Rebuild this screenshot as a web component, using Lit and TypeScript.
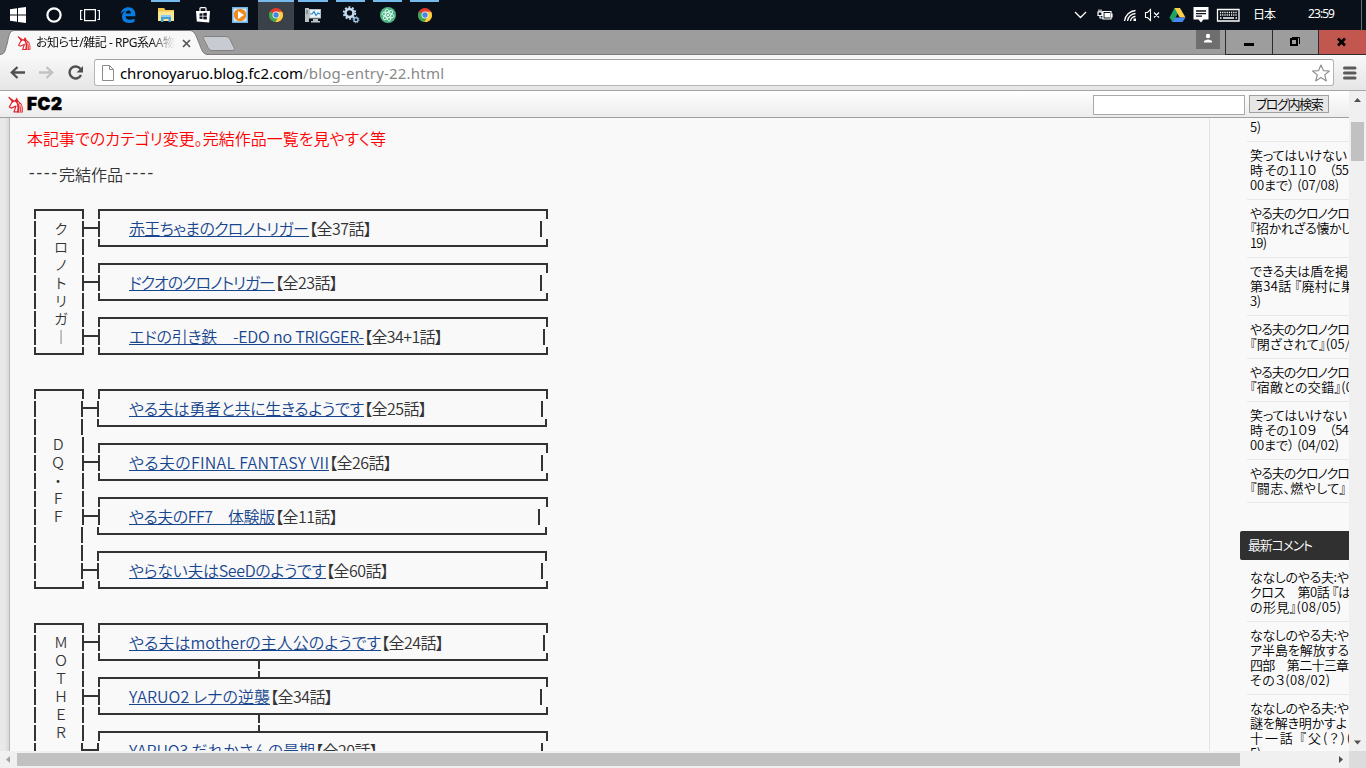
import { LitElement, html, css, svg, nothing } from 'lit';
import { customElement, property } from 'lit/decorators.js';
import { classMap } from 'lit/directives/class-map.js';

interface Work {
  title: string;
  width: number;
  count: string;
  countWidth: number;
  // x of the closing bar, measured from the left edge of the box
  bar: number;
  // left edge of the top, middle and bottom line
  left?: number[];
  // right edge of the top and bottom line
  right?: number[];
  linked?: boolean;
}

interface Group {
  label: string[];
  center: number;
  narrow?: number[];
  works: Work[];
}

const groups: Group[] = [
  {
    label: ['ク', 'ロ', 'ノ', 'ト', 'リ', 'ガ', '｜'],
    center: 27,
    works: [
      { title: '赤王ちゃまのクロノトリガー', width: 180, count: '【全37話】', countWidth: 63, bar: 442 },
      { title: 'ドクオのクロノトリガー', width: 146, count: '【全23話】', countWidth: 63, bar: 442 },
      { title: 'エドの引き鉄　-EDO no TRIGGER-', width: 235, count: '【全34+1話】', countWidth: 79, bar: 445 },
    ],
  },
  {
    label: ['', '', 'Ｄ', 'Ｑ', '・', 'Ｆ', 'Ｆ', '', '', ''],
    center: 24,
    narrow: [0, 1, 7, 8, 9],
    works: [
      { title: 'やる夫は勇者と共に生きるようです', width: 235, count: '【全25話】', countWidth: 63, bar: 443, left: [0, -1, -1], right: [0, -1] },
      { title: 'やる夫のFINAL FANTASY VII', width: 200, count: '【全26話】', countWidth: 63, bar: 443 },
      { title: 'やる夫のFF7　体験版', width: 146, count: '【全11話】', countWidth: 63, bar: 440, left: [0, 0, -1], right: [0, -1] },
      { title: 'やらない夫はSeeDのようです', width: 197, count: '【全60話】', countWidth: 63, bar: 443, left: [-1, -1, 0], right: [-1, 0] },
    ],
  },
  {
    label: ['Ｍ', 'Ｏ', 'Ｔ', 'Ｈ', 'Ｅ', 'Ｒ', ''],
    center: 27,
    narrow: [6],
    works: [
      { title: 'やる夫はmotherの主人公のようです', width: 252, count: '【全24話】', countWidth: 63, bar: 445, linked: true },
      { title: 'YARUO2 レナの逆襲', width: 141, count: '【全34話】', countWidth: 63, bar: 442, linked: true },
      { title: 'YARUO3 だれかさんの最期', width: 186, count: '【全20話】', countWidth: 63, bar: 443, left: [0, -1, 0] },
    ],
  },
];

type Line = [string, number];

const entries: Line[][] = [
  [['5)', 11]],
  [['笑ってはいけない', 97], ['時 その１１０　（55', 99], ['00まで） (07/08)', 89]],
  [['やる夫のクロノクロ', 100], ['『招かれざる懐かし', 102], ['19)', 17]],
  [['できる夫は盾を掲', 98], ['第34話 『廃村に巣', 104], ['3)', 11]],
  [['やる夫のクロノクロ', 100], ['『閉ざされて』(05/', 100]],
  [['やる夫のクロノクロ', 100], ['『宿敵との交錯』(0', 103]],
  [['笑ってはいけない', 97], ['時 その１０９　（54', 99], ['00まで） (04/02)', 89]],
  [['やる夫のクロノクロ', 100], ['『闘志、燃やして』', 96]],
];

const comments: Line[][] = [
  [['ななしのやる夫:や', 99], ['クロス　第0話 『は', 101], ['の形見』(08/05)', 91]],
  [['ななしのやる夫:や', 99], ['ア半島を解放する', 99], ['四部　第二十三章', 99], ['その３(08/02)', 80]],
  [['ななしのやる夫:や', 99], ['謎を解き明かすよ', 97], ['十一話 『父(？)(', 101], ['5)', 11]],
];

const chrome = svg`
  <g transform="translate(1 1) scale(.875)">
    <circle cx="8" cy="8" r="8" fill="#e33b2e" />
    <path d="M8 8 L1.100 4 A8 8 0 0 0 7 16 L11.500 9.500Z" fill="#39a852" />
    <path d="M8 4.200 H15 A8 8 0 0 1 7.200 16 L11.500 9Z" fill="#fdd03a" />
    <circle cx="8" cy="8" r="4" fill="#f4f4f4" />
    <circle cx="8" cy="8" r="3.100" fill="#4a86e0" />
  </g>`;

const taskIcons = [
  {
    w: 36,
    icon: svg`<path fill="#fff" d="M0 2.300 7 1.300V7.500H0zM8 1.100 16 0V7.500H8zM0 8.500H7V14.700L0 13.700zM8 8.500H16V16L8 14.900z" />`,
  },
  { w: 36, icon: svg`<circle cx="8" cy="8" r="6.600" fill="none" stroke="#fff" stroke-width="2.200" />` },
  {
    w: 36,
    icon: svg`<path fill="none" stroke="#fff" stroke-width="1.200" d="M2.600 2.600h10.800v11H2.600zM.500 3.500H-1.400v9H.500M15.500 3.500h1.900v9h-1.900" />`,
  },
  {
    w: 39,
    icon: svg`<path fill="#0a7ce0" d="M.6 7C1.300 2.500 4.600.2 8.400.2c4.600 0 7 3.300 7 7.500v1.500H5.500c.2 2.500 2.200 3.500 4.600 3.500 1.700 0 3-.4 4.400-1.200v3.300c-1.500.8-3.300 1.200-5.300 1.200-4.500 0-7.200-2.600-7.200-6.400 0-2.500 1.300-4.600 3.500-5.700C3.300 4.200 1.700 5.200.6 7zM5.700 6.600h5.200C10.900 4.700 10 3.600 8.400 3.600 6.900 3.600 5.900 4.800 5.700 6.600z" />`,
  },
  {
    w: 37,
    run: true,
    icon: svg`<path fill="#f4c84f" d="M0 1h6l1.500 2H16v11H0z" /><path fill="#fde692" d="M0 4.500h16V14H0z" /><path fill="#3f9ddb" d="M3 8h10v7h-2.500v-3h-5v3H3z" /><path fill="#8bcdf4" d="M3 8h10v2H3z" />`,
  },
  {
    w: 37,
    icon: svg`<path fill="#fff" d="M1 4h14l-.8 11.500-12.400-1z" /><path fill="none" stroke="#fff" stroke-width="1.200" d="M5 4V1.600q0-1 1-1h4q1 0 1 1V4" /><path fill="#0a101a" d="M4.500 6.500l3-.3v2.500h-3zM8.300 6.100l3.500-.4v3H8.300zM4.500 9.500h3V12l-3-.3zM8.300 9.500h3.500v3L8.300 12.200z" />`,
  },
  {
    w: 37,
    icon: svg`<path fill="#6db4e8" d="M0 0h16v16H0z" /><path fill="#d8e9f5" d="M1.500 1.500h13v13h-13z" /><circle cx="8" cy="8" r="6.200" fill="#f08a1c" /><path fill="#fff" d="M6 4l6 4-6 4z" />`,
  },
  { w: 36, run: true, active: true, icon: chrome },
  {
    w: 38,
    run: true,
    icon: svg`<path fill="#b9c0c4" d="M0 1h4v14H0zM4 2h12v9.500H4zM8 12h5v2h2v1.500H6V14h2z" /><path fill="#eef5f9" d="M5 3h10v7.500H5z" /><path fill="none" stroke="#1f86c7" stroke-width="1.200" d="M5 7h2l2-2.500 2 4L13 6l2 1" /><path stroke="#56626a" d="M1 4h2M1 6h2" />`,
  },
  {
    w: 37,
    run: true,
    icon: svg`<circle cx="6.500" cy="6" r="4" fill="none" stroke="#c3dcf0" stroke-width="2.600" /><circle cx="6.500" cy="6" r="5.800" fill="none" stroke="#c3dcf0" stroke-width="1.800" stroke-dasharray="2 1.640" /><circle cx="13" cy="12.800" r="2" fill="none" stroke="#9fc4e2" stroke-width="1.400" /><circle cx="13" cy="12.800" r="3" fill="none" stroke="#9fc4e2" stroke-width="1" stroke-dasharray="1.200 1.100" />`,
  },
  {
    w: 37,
    run: true,
    icon: svg`<circle cx="8" cy="8" r="8" fill="#4fb585" /><g fill="none" stroke="#e9fff4" stroke-width=".9"><ellipse cx="8" cy="8" rx="6" ry="2.400" transform="rotate(15 8 8)" /><ellipse cx="8" cy="8" rx="6" ry="2.400" transform="rotate(75 8 8)" /><ellipse cx="8" cy="8" rx="6" ry="2.400" transform="rotate(135 8 8)" /></g><circle cx="8" cy="8" r="1.100" fill="#fff" />`,
  },
  { w: 37, run: true, icon: chrome },
];

const unicorn = svg`
  <path fill="#fff" stroke="#e0242c" stroke-width="1.200" stroke-linejoin="round" d="M.8 .8 5 4.300 3.500 6.500 1.300 10.600 3 11.600 5.500 10.600 8 9.500 6 15.400H10V5L5 4.300" />
  <path fill="#e0242c" d="M0 0 6.400 4.400 4.500 6.500zM6.500 4.500 8.800 1 10.500 4.500 13.500 7.200 14.800 11V16H9L10 11 8.500 6.500z" />
  <path fill="none" stroke="#fff" stroke-width=".7" d="M10 5.500 12 9.500 11.300 15.500M12.200 7.500 13.600 11 13.200 15.500" />`;

/** Single line of text that is spaced out or tightened to a fixed width. */
@customElement('fit-text')
export class FitText extends LitElement {
  static styles = css`
    :host {
      display: inline-block;
      white-space: pre;
      flex: none;
    }
  `;

  @property()
  text = '';

  @property({ type: Number })
  width = 0;

  updated() {
    const span = this.renderRoot.querySelector('span') as HTMLElement;
    span.style.letterSpacing = '0px';
    const natural = span.getBoundingClientRect().width;
    const gaps = Math.max(1, [...this.text].length - 1);
    span.style.letterSpacing = `${(this.width - natural) / gaps}px`;
    this.style.width = `${this.width}px`;
  }

  render() {
    return html`<span>${this.text}</span>`;
  }
}

@customElement('task-bar')
export class TaskBar extends LitElement {
  static styles = css`
    :host {
      display: flex;
      height: 30px;
      background: #091019;
      color: #fff;
      font: 12px/30px 'Noto Sans', 'Noto Sans CJK JP', sans-serif;
    }

    .app {
      display: flex;
      justify-content: center;
      height: 30px;
      box-sizing: border-box;
      padding-top: 7px;
    }

    .run {
      padding-top: 5px;
      border-top: 2px solid #76b9ed;
      margin: 0 4px;
    }

    .active {
      background: #3b4148;
      margin: 0;
    }

    svg {
      overflow: visible;
      display: block;
      flex: none;
    }

    .tray {
      display: flex;
      margin-left: auto;
      align-items: center;
    }

    .lang {
      margin-right: 32px;
    }

    .clock {
      margin-right: 26px;
      margin-top: -3px;
    }

    .edge {
      width: 1px;
      height: 30px;
      background: #6a6e74;
      margin-right: 4px;
    }
  `;

  render() {
    return html`
      ${taskIcons.map(
        (t) => html`
          <div
            class=${classMap({ app: true, run: !!t.run, active: !!t.active })}
            style="width:${t.run && !t.active ? t.w - 8 : t.w}px"
          >
            <svg width="16" height="16" viewBox="0 0 16 16">${t.icon}</svg>
          </div>
        `
      )}
      <div class="tray">
        <svg width="181" height="30" viewBox="1073 0 181 30">
          <path fill="none" stroke="#fff" stroke-width="1.300" d="M1076 12l5.500 5.500 5.500-5.500" />
          <path fill="none" stroke="#fff" stroke-width="1.200" d="M1104 11.500h8v7.500h-8zM1113 13.500v4M1099 12h4v3.500h-4zM1100 9.500v2.500M1102 9.500v2.500M1101 15.500v2.500h3" />
          <path fill="#fff" d="M1105.500 13h5.500v4.500h-5.500z" />
          <path fill="none" stroke="#fff" stroke-width="1.300" d="M1125.500 21a12 12 0 0 1 11-10.500M1128.500 21a8.500 8.500 0 0 1 8-7.500M1131.500 21a5 5 0 0 1 5-4.500" />
          <path fill="#fff" d="M1134.500 18.500h2.500V21h-2.500z" />
          <path fill="none" stroke="#fff" stroke-width="1.100" d="M1146.500 12.500h2l3-3v11l-3-3h-2zM1155 12.500l5 5M1160 12.500l-5 5" />
          <path fill="#1da362" d="M1175.500 8h.5l3 5.200-5.300 9-3.200-4.600z" />
          <path fill="#ffd04b" d="M1175.500 8h5.500l5.500 9.500h-5.700z" />
          <path fill="#4688f4" d="M1176 17.500h10.500l-3 4.500h-10z" />
          <path fill="#fff" d="M1194.500 7h15v12.500h-5l-2.500 3-2.500-3h-5z" />
          <path stroke="#091019" stroke-width="1.300" d="M1197 11h10M1197 13.600h10M1197 16.200h6" />
          <path fill="none" stroke="#fff" stroke-width="1.300" d="M1218.500 9.500h21.500v11.500h-21.500z" />
          <path stroke="#fff" stroke-width="1.400" stroke-dasharray="1.200 1" d="M1221 12.500h17M1221 15h17" />
          <path stroke="#fff" stroke-width="1.400" d="M1221 18h1.500M1224 18h11M1236.500 18h1.500" />
        </svg>
        <fit-text class="lang" text="日本" width="23"></fit-text>
        <fit-text class="clock" text="23:59" width="27"></fit-text>
        <span class="edge"></span>
      </div>
    `;
  }
}

@customElement('browser-chrome')
export class BrowserChrome extends LitElement {
  static styles = css`
    :host {
      display: block;
      font-family: 'Noto Sans', 'Noto Sans CJK JP', sans-serif;
      font-weight: 400;
    }

    svg {
      display: block;
      flex: none;
      overflow: visible;
    }

    .strip {
      display: flex;
      height: 24px;
      background: #9d9d9d;
    }

    .tab {
      position: relative;
      width: 206px;
      height: 24px;
      display: flex;
      align-items: center;
      box-sizing: border-box;
      padding-left: 17px;
    }

    .shape {
      position: absolute;
      left: 0;
      top: 0;
    }

    .icon,
    .close {
      position: relative;
      margin-top: 2px;
    }

    .title {
      position: relative;
      margin-left: 5px;
      width: 139px;
      overflow: hidden;
      font-size: 12px;
      line-height: 20px;
      color: #111;
      -webkit-mask-image: linear-gradient(90deg, #000 82%, transparent);
      mask-image: linear-gradient(90deg, #000 82%, transparent);
    }

    .title fit-text {
      display: block;
      margin-top: 2px;
    }

    .close {
      margin-left: 7px;
    }

    .controls {
      display: flex;
      margin-left: auto;
    }

    .user {
      width: 24px;
      height: 19px;
      background: #6e6e6e;
      margin-right: 5px;
    }

    .control {
      box-sizing: border-box;
      height: 25px;
      border-left: 1px solid #2c2c2c;
      border-bottom: 1px solid #2c2c2c;
      position: relative;
    }

    .quit {
      background: #c2574f;
    }

    .toolbar {
      display: flex;
      align-items: center;
      height: 37px;
      box-sizing: border-box;
      border-top: 1px solid #7c7c7c;
      border-bottom: 1px solid #a5a5a5;
      background: linear-gradient(#f8f8f8, #e6e6e6);
    }

    .address {
      display: flex;
      align-items: center;
      box-sizing: border-box;
      width: 1240px;
      height: 27px;
      margin-left: 1px;
      padding: 0 3px 0 7px;
      background: #fff;
      border: 1px solid #b5b5b5;
      border-top-color: #a0a0a0;
      border-radius: 3px;
      font-size: 15px;
      line-height: 24px;
      color: #000;
    }

    .host {
      margin-left: 6px;
    }

    .path {
      color: #888;
    }

    .star {
      margin-left: auto;
    }

    .menu {
      margin-left: 9px;
    }
  `;

  render() {
    return html`
      <div class="strip">
        <div class="tab">
          <svg class="shape" width="240" height="25">
            <path d="M0 24.500C5 24 5 21 7 14 9 6 9 1 14 .5H190C195 1 196 6 199 13 202 20 202 24 208 24.500V26H0z" fill="#f8f8f8" />
            <path d="M0 24.500C5 24 5 21 7 14 9 6 9 1 14 .5H190C195 1 196 6 199 13 202 20 202 24 208 24.500" fill="none" stroke="#777" />
            <path d="M204 6.500h22q3 0 4 3l4 8q1.500 3-2 3h-20q-3 0-4-3l-4-8q-1.500-3 0-3z" fill="#c8ccd2" stroke="#818181" />
          </svg>
          <svg class="icon" width="14" height="14" viewBox="0 0 15 16">${unicorn}</svg>
          <div class="title"><fit-text text="お知らせ/雑記 - RPG系AA物" width="139"></fit-text></div>
          <svg class="close" width="9" height="9"><path d="M1 1l7 7M8 1l-7 7" stroke="#555" stroke-width="1.700" /></svg>
        </div>
        <div class="controls">
          <div class="user">
            <svg width="24" height="19"><circle cx="12" cy="6" r="2.200" fill="#fff" /><path fill="#fff" d="M8 12.500V11q4-3 8 0v1.500z" /></svg>
          </div>
          <div class="control" style="width:47px">
            <svg width="46" height="24"><path fill="#000" d="M18 13h10v3H18z" /></svg>
          </div>
          <div class="control" style="width:46px">
            <svg width="45" height="24"><path fill="none" stroke="#000" stroke-width="2" d="M18 9h6v6h-6z" /><path fill="none" stroke="#000" d="M19 7.500h7.500V14" /></svg>
          </div>
          <div class="control quit" style="width:48px">
            <svg width="47" height="24"><path stroke="#000" stroke-width="2.600" d="M19 8.500l7 7M26 8.500l-7 7" /></svg>
          </div>
        </div>
      </div>
      <div class="toolbar">
        <svg width="93" height="35" viewBox="0 55 93 35">
          <path fill="none" stroke="#505050" stroke-width="2.300" d="M25 72.500H12M17.500 67l-5.700 5.500 5.700 5.500" />
          <path fill="none" stroke="#c2c2c2" stroke-width="2.300" d="M39 72.500h13M46.500 67l5.700 5.500-5.700 5.500" />
          <path fill="none" stroke="#505050" stroke-width="2.400" d="M80.500 69A6 6 0 1 0 81 75" />
          <path fill="#505050" d="M83 66v6.500h-6.500z" />
        </svg>
        <div class="address">
          <svg width="12" height="16"><path d="M.5 .5h7l4 4v11H.5zM7.500 .5v4h4" fill="#fff" stroke="#8b8b8b" /></svg>
          <fit-text class="host" text="chronoyaruo.blog.fc2.com" width="183"></fit-text>
          <fit-text class="path" text="/blog-entry-22.html" width="141"></fit-text>
          <svg class="star" width="18" height="18"><path d="M9 1l2.400 5.600 6 .4-4.700 3.900 1.600 6L9 13.600l-5.300 3.300 1.600-6L.6 7l6-.4z" fill="#fff" stroke="#8f8f8f" stroke-width="1.200" stroke-linejoin="round" /></svg>
        </div>
        <svg class="menu" width="14" height="14"><path stroke="#5a5a5a" stroke-width="3" stroke-linecap="round" d="M1.500 2h10.500M1.500 7h10.500M1.500 12h10.500" /></svg>
      </div>
    `;
  }
}

@customElement('work-group')
export class WorkGroup extends LitElement {
  static styles = css`
    :host {
      display: flex;
      height: fit-content;
      --line: 2px solid #333;
    }

    .label {
      width: 50px;
      flex: none;
    }

    .top,
    .mid,
    .bottom {
      box-sizing: border-box;
      border-left: var(--line);
    }

    .top,
    .bottom {
      border-right: var(--line);
    }

    .top {
      height: 10px;
      border-top: var(--line);
    }

    .mid {
      height: 16px;
      margin-top: 2px;
      line-height: 14px;
    }

    .bottom {
      height: 8px;
      margin-top: 2px;
      border-bottom: var(--line);
    }

    .label .mid {
      border-right: var(--line);
      text-align: center;
      font-size: 14px;
    }

    .label .narrow {
      margin-right: 1px;
    }

    .letter {
      display: block;
    }

    .works {
      display: flex;
      flex-direction: column;
    }

    .work {
      display: flex;
      height: 38px;
    }

    .joint {
      flex: none;
      width: 17px;
      height: 2px;
      margin: 18px -1px 0 -2px;
      background: #333;
    }

    .box {
      width: 450px;
      height: 38px;
    }

    .box .mid {
      display: flex;
    }

    a {
      display: flex;
      box-sizing: border-box;
      height: 16px;
      margin-left: 29px;
      color: #17468f;
      border-bottom: 1px solid #17468f;
    }

    .bar {
      width: 2px;
      background: #333;
    }

    .gap {
      height: 16px;
      box-sizing: border-box;
      padding-left: 174px;
    }

    .link {
      display: block;
      width: 2px;
      height: 16px;
      background: linear-gradient(#333 8px, transparent 8px 10px, #333 10px);
    }
  `;

  @property({ attribute: false })
  group!: Group;

  private renderWork(w: Work) {
    const left = w.left ?? [0, 0, 0];
    const right = w.right ?? [0, 0];
    return html`
      <div class="work">
        <div class="joint"></div>
        <div class="box">
          <div class="top" style="margin-left:${left[0]}px;margin-right:${-right[0]}px"></div>
          <div class="mid" style="margin-left:${left[1]}px">
            <a style="margin-left:${29 - left[1]}px"><fit-text .text=${w.title} .width=${w.width}></fit-text></a>
            <fit-text .text=${w.count} .width=${w.countWidth}></fit-text>
            <span class="bar" style="margin-left:${w.bar - 31 - w.width - w.countWidth}px"></span>
          </div>
          <div class="bottom" style="margin-left:${left[2]}px;margin-right:${-right[1]}px"></div>
        </div>
      </div>
    `;
  }

  render() {
    const g = this.group;
    return html`
      <div class="label">
        <div class="top"></div>
        ${g.label.map(
          (c, i) => html`
            <div class=${classMap({ mid: true, narrow: !!g.narrow?.includes(i) })}>
              <span class="letter" style="width:${(g.center - 2) * 2}px">${c}</span>
            </div>
          `
        )}
        <div class="bottom"></div>
      </div>
      <div class="works">
        ${g.works.map(
          (w, i) => html`
            ${this.renderWork(w)}
            ${i < g.works.length - 1
              ? html`<div class="gap">${w.linked ? html`<span class="link"></span>` : nothing}</div>`
              : nothing}
          `
        )}
      </div>
    `;
  }
}

@customElement('blog-sidebar')
export class BlogSidebar extends LitElement {
  static styles = css`
    :host {
      display: block;
      width: 140px;
      box-sizing: border-box;
      border-left: 1px solid #e4e4e4;
      padding-left: 30px;
      overflow: hidden;
      font-size: 13px;
      line-height: 15px;
      color: #000;
    }

    .entry {
      margin-left: 7px;
      padding: 5px 0 7px 3px;
      border-bottom: 1px solid #e8e8e8;
    }

    .recent .entry:first-child {
      padding-top: 1px;
    }

    fit-text {
      display: block;
      height: 15px;
    }

    h2 {
      margin: 28px 0 4px;
      height: 29px;
      padding-left: 8px;
      background: #303030;
      border-radius: 2px 0 0 2px;
      color: #fff;
      font-size: 13px;
      font-weight: inherit;
      line-height: 28px;
    }
  `;

  private renderEntry(lines: Line[]) {
    return html`
      <div class="entry">
        ${lines.map(([text, width]) => html`<fit-text .text=${text} .width=${width}></fit-text>`)}
      </div>
    `;
  }

  render() {
    return html`
      <div class="recent">${entries.map((e) => this.renderEntry(e))}</div>
      <h2><fit-text text="最新コメント" width="65"></fit-text></h2>
      <div>${comments.map((c) => this.renderEntry(c))}</div>
    `;
  }
}

@customElement('app-root')
export class AppRoot extends LitElement {
  static styles = css`
    :host {
      display: block;
      width: 1366px;
      height: 768px;
      overflow: hidden;
      background: #f9f9f9;
      font-family: 'Noto Sans CJK JP', sans-serif;
      font-weight: 350;
      font-feature-settings: 'palt';
    }

    .window {
      display: grid;
      grid-template-columns: 1349px 17px;
      grid-template-rows: 660px 17px;
    }

    .page {
      overflow: hidden;
      display: flex;
      flex-direction: column;
    }

    .header {
      display: flex;
      align-items: center;
      flex: none;
      height: 27px;
      box-sizing: border-box;
      padding: 0 20px 0 8px;
      border-bottom: 1px solid #a0a0a0;
      background: linear-gradient(#fff, #ececec);
    }

    .logo {
      margin-left: 4px;
      font: 900 17px/20px Inter, 'Liberation Sans', sans-serif;
      color: #000;
      -webkit-text-stroke: 0.6px #000;
    }

    .search {
      box-sizing: border-box;
      width: 152px;
      height: 20px;
      margin: 1px 4px 0 auto;
      border: 1px solid #a9a9a9;
      background: #fff;
    }

    button {
      box-sizing: border-box;
      width: 80px;
      height: 18px;
      margin: 0;
      padding: 0 0 0 5px;
      border: 1px solid #a0a0a0;
      background: #e6e6e6;
      font: inherit;
      font-size: 13px;
      line-height: 15px;
      color: #000;
      display: flex;
    }

    .body {
      display: flex;
      height: 633px;
      background: #f9f9f9;
    }

    .margin {
      flex: none;
      width: 10px;
      box-sizing: border-box;
      border-right: 1px solid #b8b8b8;
      background: linear-gradient(90deg, #e9e9e9 50%, #d9d9d9);
    }

    .article {
      width: 1199px;
      box-sizing: border-box;
      padding: 11px 0 0 17px;
      font-size: 16px;
      line-height: 18px;
      color: #333;
    }

    .article p {
      display: flex;
      margin: 0 0 18px;
      height: 18px;
    }

    .notice {
      color: #f00;
    }

    .dash {
      font-family: 'Liberation Mono', monospace;
    }

    work-group {
      margin: 26px 0 34px 7px;
    }

    work-group + work-group {
      margin-top: 0;
    }

    .vbar,
    .hbar {
      display: flex;
      align-items: center;
      background: #f0f0f0;
    }

    .vbar {
      flex-direction: column;
    }

    .vbar .thumb {
      width: 13px;
      height: 39px;
      margin-top: 14px;
      background: #c1c1c1;
    }

    .hbar .thumb {
      width: 1223px;
      height: 13px;
      background: #c1c1c1;
    }

    .vbar svg:last-child {
      margin-top: auto;
    }

    .hbar svg:last-child {
      margin-left: auto;
    }

    .corner {
      background: #dcdcdc;
    }

    svg {
      display: block;
    }
  `;

  render() {
    return html`
      <task-bar></task-bar>
      <browser-chrome></browser-chrome>
      <div class="window">
        <div class="page">
          <div class="header">
            <svg width="15" height="17" viewBox="0 0 15 16">${unicorn}</svg>
            <fit-text class="logo" text="FC2" width="35"></fit-text>
            <div class="search"></div>
            <button><fit-text text="ブログ内検索" width="68"></fit-text></button>
          </div>
          <div class="body">
            <div class="margin"></div>
            <div class="article">
              <p class="notice"><fit-text text="本記事でのカテゴリ変更。完結作品一覧を見やすく等" width="359"></fit-text></p>
              <p>
                <fit-text class="dash" text="----" width="32"></fit-text>
                <fit-text text="完結作品" width="64"></fit-text>
                <fit-text class="dash" text="----" width="32"></fit-text>
              </p>
              ${groups.map((g) => html`<work-group .group=${g}></work-group>`)}
            </div>
            <blog-sidebar></blog-sidebar>
          </div>
        </div>
        <div class="vbar">
          <svg width="17" height="17"><path fill="#505050" d="M5 11l3.500-4 3.500 4z" /></svg>
          <div class="thumb"></div>
          <svg width="17" height="17"><path fill="#505050" d="M5 6.500l3.500 4 3.500-4z" /></svg>
        </div>
        <div class="hbar">
          <svg width="17" height="17"><path fill="#a3a3a3" d="M10 5L6 8.500l4 3.500z" /></svg>
          <div class="thumb"></div>
          <svg width="17" height="17"><path fill="#505050" d="M7 5l4 3.500-4 3.500z" /></svg>
        </div>
        <div class="corner"></div>
      </div>
    `;
  }
}
